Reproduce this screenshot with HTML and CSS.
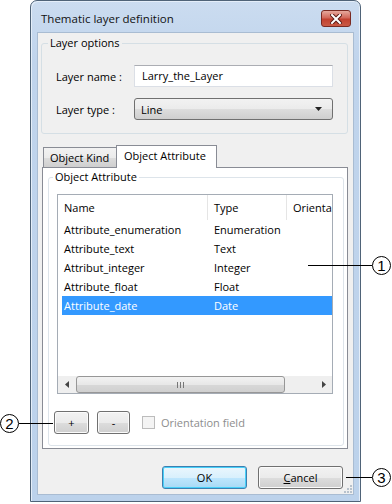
FILE: index.html
```html
<!DOCTYPE html>
<html>
<head>
  <title>Thematic layer definition</title>
  <link rel="stylesheet" href="styles.css">
</head>
<body>
  <div class="screen">
    <div class="window">
      <div class="titlebar">
        <span class="title">Thematic layer definition</span>
        <div class="close">
          <svg width="12" height="10" viewBox="0 0 12 10">
            <path d="M2 1 L10 9 M10 1 L2 9" stroke="#5a1a14" stroke-width="4" stroke-linecap="square"/>
            <path d="M2 1 L10 9 M10 1 L2 9" stroke="#fff" stroke-width="2" stroke-linecap="square"/>
          </svg>
        </div>
      </div>

      <div class="client">
        <fieldset class="group options">
          <legend>Layer options</legend>
          <div class="field">
            <label>Layer name :</label>
            <div class="textbox">Larry_the_Layer</div>
          </div>
          <div class="field">
            <label>Layer type :</label>
            <div class="combo">
              <span>Line</span>
              <svg width="7" height="4" viewBox="0 0 7 4"><path d="M0 0 H7 L3.5 4 Z" fill="#222"/></svg>
            </div>
          </div>
        </fieldset>

        <div class="tabs">
          <div class="tab-strip">
            <div class="tab">Object Kind</div>
            <div class="tab active">Object Attribute</div>
          </div>
          <div class="tab-panel">
            <fieldset class="group attrs">
              <legend>Object Attribute</legend>
              <div class="listview">
                <div class="lv-head">
                  <span class="col-name">Name</span>
                  <span class="col-type">Type</span>
                  <span class="col-orient">Orienta</span>
                </div>
                <div class="lv-row"><span>Attribute_enumeration</span><span>Enumeration</span></div>
                <div class="lv-row"><span>Attribute_text</span><span>Text</span></div>
                <div class="lv-row"><span>Attribut_integer</span><span>Integer</span></div>
                <div class="lv-row"><span>Attribute_float</span><span>Float</span></div>
                <div class="lv-row selected"><span>Attribute_date</span><span>Date</span></div>
                <div class="lv-fill"></div>
                <div class="hscroll">
                  <div class="arrow">
                    <svg width="4" height="7" viewBox="0 0 4 7"><path d="M4 0 V7 L0 3.5 Z" fill="#444"/></svg>
                  </div>
                  <div class="track">
                    <div class="thumb">
                      <svg width="7" height="6" viewBox="0 0 7 6"><path d="M0.5 0 V6 M3.5 0 V6 M6.5 0 V6" stroke="#777" stroke-width="1"/></svg>
                    </div>
                  </div>
                  <div class="arrow">
                    <svg width="4" height="7" viewBox="0 0 4 7"><path d="M0 0 V7 L4 3.5 Z" fill="#444"/></svg>
                  </div>
                </div>
              </div>

              <div class="list-actions">
                <button class="btn small">+</button>
                <button class="btn small">-</button>
                <label class="check disabled"><span class="box"></span>Orientation field</label>
              </div>
            </fieldset>
          </div>
        </div>

        <div class="dialog-buttons">
          <button class="btn default">OK</button>
          <button class="btn"><u>C</u>ancel</button>
        </div>

        <svg class="grip" width="8" height="8" viewBox="0 0 8 8">
          <rect x="6" y="0" width="2" height="2" fill="#b8c2cc"/>
          <rect x="3" y="3" width="2" height="2" fill="#b8c2cc"/>
          <rect x="6" y="3" width="2" height="2" fill="#b8c2cc"/>
          <rect x="0" y="6" width="2" height="2" fill="#b8c2cc"/>
          <rect x="3" y="6" width="2" height="2" fill="#b8c2cc"/>
          <rect x="6" y="6" width="2" height="2" fill="#b8c2cc"/>
        </svg>
      </div>
    </div>

    <!-- callout annotations -->
    <svg class="callouts" width="392" height="504" viewBox="0 0 392 504">
      <g stroke="#000" stroke-width="1" fill="none">
        <path d="M308 265.5 H372"/>
        <circle cx="381.5" cy="265.5" r="9"/>
        <path d="M19 423.5 H53"/>
        <circle cx="9.5" cy="423.5" r="9"/>
        <path d="M346 477.5 H372"/>
        <circle cx="381.5" cy="477.5" r="9"/>
      </g>
      <g class="callout-num">
        <text x="381.5" y="271">1</text>
        <text x="9.5" y="429">2</text>
        <text x="381.5" y="483">3</text>
      </g>
    </svg>
  </div>
</body>
</html>
```

FILE: styles.css
```css
* {
  box-sizing: border-box;
}

body {
  margin: 0;
  background-color: #fff;
  font-family: "Open Sans", "Noto Sans", sans-serif;
  font-size: 11px;
  color: #000;
}

.screen {
  position: relative;
  width: 392px;
  height: 504px;
}

/* window frame */

.window {
  margin-left: 30px;
  width: 331px;
  height: 502px;
  border: 1px solid #4f6378;
  border-radius: 7px 7px 0 0;
  background: linear-gradient(#cbdcf0, #c0d4ec 60px, #bcd2eb);
  box-shadow: inset 1px 1px 0 #e4eef9, inset -1px 0 0 #e4eef9;
  display: flex;
  flex-direction: column;
}

.titlebar {
  height: 31px;
  padding: 0 9px 0 10px;
  display: flex;
  justify-content: space-between;
  align-items: flex-start;
}

.title {
  margin-top: 10px;
  font-size: 11.5px;
  line-height: 16px;
  color: #111;
}

.close {
  margin-top: 9px;
  width: 30px;
  height: 17px;
  border: 1px solid #7a2a22;
  border-radius: 3px;
  background: linear-gradient(#e6a99d, #d2685a 45%, #c2412f 55%, #c95a45);
  display: flex;
  align-items: center;
  justify-content: center;
}

.client {
  position: relative;
  flex: 1;
  margin: 0 6px 6px 6px;
  border: 1px solid #a9bcd2;
  background-color: #f0f0f0;
}

/* group boxes */

.group {
  margin: 0;
  border: 1px solid #d5dfe5;
  border-radius: 3px;
  min-width: 0;
}

.group legend {
  padding: 0 2px;
  line-height: 16px;
}

.options {
  margin: 2px 5px 0 3px;
  padding: 0 0 13px 6px;
}

.field {
  display: flex;
  align-items: center;
  height: 22px;
  padding-left: 8px;
  margin-top: 11px;
}

.options legend + .field {
  margin-top: 14px;
}

.field label {
  width: 78px;
}

.textbox {
  width: 199px;
  height: 22px;
  padding: 0 7px;
  line-height: 20px;
  background-color: #fff;
  border: 1px solid #dbdfe6;
  border-top-color: #abadb3;
}

.combo {
  width: 199px;
  height: 22px;
  padding: 0 7px 0 6px;
  display: flex;
  justify-content: space-between;
  align-items: center;
  border: 1px solid #707070;
  border-radius: 3px;
  background: linear-gradient(#f2f2f2, #ebebeb 50%, #dddddd 51%, #cfcfcf);
}

.combo svg {
  margin-right: 3px;
}

/* tabs */

.tabs {
  margin: 11px 5px 0 4px;
}

.tab-strip {
  display: flex;
  align-items: flex-start;
  padding-left: 1px;
}

.tab {
  margin-top: 2px;
  width: 74px;
  height: 20px;
  padding-left: 6px;
  line-height: 19px;
  border: 1px solid #898c95;
  border-bottom: none;
  background: linear-gradient(#f2f2f2, #ebebeb 50%, #dddddd 51%, #cfcfcf);
}

.tab.active {
  position: relative;
  z-index: 1;
  margin-top: 0;
  margin-left: -1px;
  width: 101px;
  height: 23px;
  padding-left: 7px;
  line-height: 19px;
  background: #fff;
}

.tab-panel {
  margin-top: -1px;
  padding: 1px 3px 2px 5px;
  border: 1px solid #898c95;
  background-color: #fff;
}

.attrs {
  padding: 0 9px 11px 8px;
  border-color: #dde4ea;
}

.attrs legend {
  margin-left: -4px;
}

/* list view */

.listview {
  margin-top: 9px;
  width: 276px;
  height: 200px;
  border: 1px solid #a5acb5;
  display: flex;
  flex-direction: column;
  overflow: hidden;
  background-color: #fff;
}

.lv-head {
  height: 25px;
  flex-shrink: 0;
  display: flex;
  align-items: center;
  white-space: nowrap;
}

.lv-head span {
  height: 25px;
  line-height: 25px;
  border-right: 1px solid #e5e5e5;
}

.col-name {
  width: 150px;
  padding-left: 6px;
}

.col-type {
  width: 79px;
  padding-left: 6px;
}

.col-orient {
  padding-left: 6px;
  border-right: none !important;
}

.lv-row {
  height: 19px;
  flex-shrink: 0;
  margin: 0 0 0 4px;
  display: grid;
  grid-template-columns: 146px 1fr;
  line-height: 19px;
}

.lv-row span:first-child {
  padding-left: 2px;
}

.lv-row span + span {
  padding-left: 6px;
}

.lv-row.selected {
  background-color: #3399ff;
  color: #fff;
}

.lv-fill {
  flex: 1;
}

.hscroll {
  height: 17px;
  flex-shrink: 0;
  display: flex;
  background: linear-gradient(90deg, #e9e9e9, #f3f3f3);
  background: #efefef;
}

.hscroll .arrow {
  width: 17px;
  display: flex;
  align-items: center;
  justify-content: center;
}

.hscroll .track {
  flex: 1;
  padding: 0 30px 0 1px;
}

.thumb {
  height: 17px;
  border: 1px solid #979797;
  border-radius: 3px;
  background: linear-gradient(#f2f2f2, #e8e8e8 50%, #d8d8d8 51%, #d0d0d0);
  display: flex;
  align-items: center;
  justify-content: center;
}

/* buttons */

.btn {
  font-family: inherit;
  font-size: 11px;
  color: #000;
  height: 23px;
  padding: 0;
  border: 1px solid #707070;
  border-radius: 3px;
  background: linear-gradient(#f2f2f2, #ebebeb 50%, #dddddd 51%, #cfcfcf);
  box-shadow: inset 0 0 0 1px #fbfbfb;
}

.list-actions {
  margin-top: 17px;
  display: flex;
  align-items: center;
}

.btn.small {
  width: 35px;
}

.btn.small:first-child {
  margin-left: -3px;
}

.btn.small + .btn.small {
  margin-left: 8px;
  width: 33px;
}

.check {
  margin-left: 12px;
  display: flex;
  align-items: center;
  gap: 6px;
}

.check.disabled {
  color: #8d8d8d;
}

.check .box {
  width: 13px;
  height: 13px;
  border: 1px solid #bcbcbc;
  background: #f4f4f4;
}

.dialog-buttons {
  margin: 17px 10px 0 0;
  display: flex;
  justify-content: flex-end;
  gap: 11px;
}

.dialog-buttons .btn {
  width: 85px;
}

.btn.default {
  border-color: #3c7fb1;
  background: linear-gradient(#eaf6fd, #d9f0fc 50%, #bee6fd 51%, #a7d9f5);
  box-shadow: inset 0 0 0 1px #48d0f8;
}

.grip {
  position: absolute;
  right: 1px;
  bottom: 1px;
}

/* annotations */

.callouts {
  position: absolute;
  left: 0;
  top: 0;
  pointer-events: none;
}

.callout-num text {
  font-family: "Liberation Sans", sans-serif;
  font-size: 15px;
  text-anchor: middle;
  fill: #000;
}
```
